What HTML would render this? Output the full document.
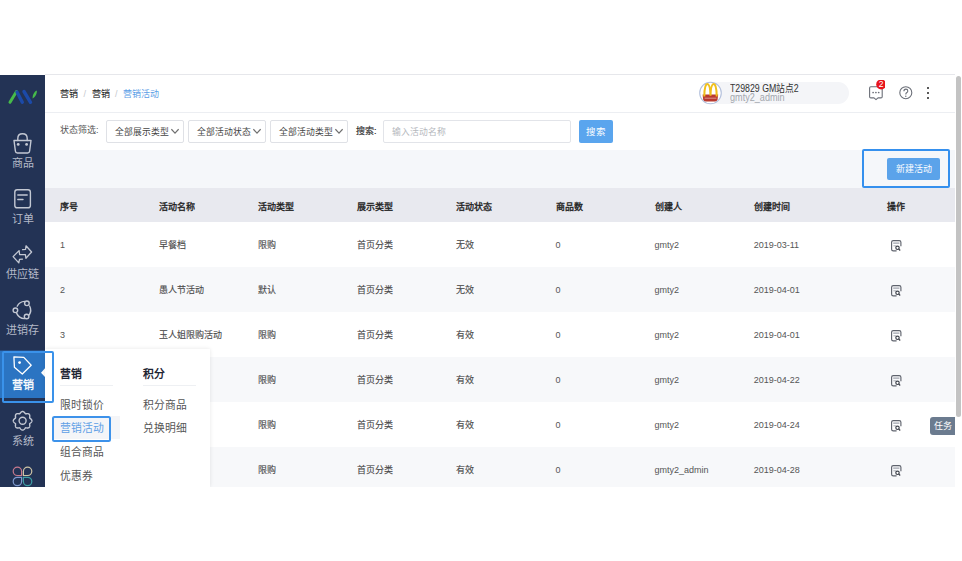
<!DOCTYPE html>
<html lang="zh-CN"><head><meta charset="utf-8">
<style>
*{box-sizing:border-box;margin:0;padding:0}
html,body{width:962px;height:561px;overflow:hidden;background:#fff;font-family:"Liberation Sans",sans-serif;color:#333}
.abs{position:absolute}
#side{left:0;top:75px;width:45px;height:412px;background:#233355;overflow:hidden}
#main{left:45px;top:74px;width:910px;height:413px;background:#fff;overflow:hidden}
.topline{left:0;top:0;width:910px;height:1px;background:#e6e7eb}
.hdr{left:0;top:1px;width:910px;height:38px;border-bottom:1px solid #eceef2;background:#fff}
.bc{left:15px;top:13px;font-size:9px;line-height:12px;color:#2a2a2a;white-space:nowrap;-webkit-text-stroke:0.1px #2a2a2a}
.bc .sep{color:#c5c8ce;margin:0 5.5px;-webkit-text-stroke:0}
.bc .cur{color:#5b9de6;-webkit-text-stroke:0}
.lbl{font-size:9px;line-height:12px;color:#555;white-space:nowrap}
.sel{top:45.5px;height:23px;border:1px solid #dfe1e6;border-radius:2px;background:#fff;font-size:8.8px;line-height:23px;color:#444;padding-left:8px;white-space:nowrap}
.sel svg{position:absolute;right:4px;top:7.6px}
.band{left:0;top:76px;width:910px;height:38px;background:#f5f7fa}
.thead{left:0;top:114px;width:910px;height:34px;background:#e8e9ef}
.row{left:0;width:910px;height:45px;background:#fff}
.row.g{background:#f7f8fa}
.c{position:absolute;font-size:9px;line-height:12px;color:#4a4a4a;white-space:nowrap;top:16.5px;-webkit-text-stroke:0.12px #4a4a4a}
.thead .c{font-weight:normal;color:#222;top:12.8px;-webkit-text-stroke:0.35px #222}
.sb{left:956px;top:76px;width:5px;height:341px;background:#c3c3c3;border-radius:3px}
.sl{left:0;width:45px;text-align:center;font-size:11px;line-height:14px;color:#b4bac8;white-space:nowrap}
.dh{font-size:10.8px;line-height:14px;font-weight:bold;color:#1f2533;white-space:nowrap}
.di{font-size:10.8px;line-height:14px;color:#555;white-space:nowrap}
.c.n{color:#555;-webkit-text-stroke:0}
</style></head><body>
<div id="side" class="abs"></div>
<svg class="abs" style="left:0;top:75px" width="45" height="412" viewBox="0 75 45 412">
  <g fill="none" stroke-linecap="round">
    <path d="M10 102.3 L16.5 91.5" stroke="#46bb4a" stroke-width="3"/>
    <path d="M17 92 L22.3 102.3" stroke="#1c4aa8" stroke-width="3.4"/>
    <path d="M24 91.5 L30.5 102.3" stroke="#1c4aa8" stroke-width="3.4"/>
  </g>
  <path d="M32.6 98.4 C32.4 95 34.5 91.5 36.8 90.6 C37.2 93.5 35.5 97 32.6 98.4Z" fill="#46bb4a"/>
  <g fill="none" stroke="#c3c8d3" stroke-width="1.4" stroke-linejoin="round" stroke-linecap="round">
    <path d="M14 140.5 H31 L29.6 151.2 Q29.4 153 27.6 153 H17.4 Q15.6 153 15.4 151.2 Z"/>
    <path d="M17.8 140.5 V138.5 Q17.8 133.8 22.5 133.8 Q27.2 133.8 27.2 138.5 V140.5"/>
    <rect x="14.8" y="189.8" width="15.6" height="18" rx="2.4"/>
    <path d="M17.8 195 H27.2 M17.8 199.5 H23"/>
    <path d="M22.6 249.6 L25.6 249.3 L26 245.8 L31.6 252 L25.9 258.2 L25.4 254.7 L19.6 254.5 L19.1 250.6 L13.1 256.6 L18.8 262.9 L19.5 259.3 L22.4 259.1" stroke-width="1.3" stroke-linecap="round"/>
    <path d="M17.2 306.2 A8.8 8.8 0 0 1 24.6 301.4 M29.6 306 A8.8 8.8 0 0 1 29.3 314.8 M24.4 318.6 A8.8 8.8 0 0 1 16.7 313.4"/>
    <circle cx="26.9" cy="303.3" r="2.3"/><circle cx="15.4" cy="310.3" r="2.3"/><circle cx="26.6" cy="316.5" r="2.3"/>
    <path d="M31.90 420.80 L31.86 421.16 L31.75 421.52 L31.57 421.86 L31.34 422.18 L31.06 422.48 L30.76 422.76 L30.45 423.02 L30.16 423.25 L29.87 423.48 L29.62 423.71 L29.64 424.05 L29.68 424.41 L29.72 424.79 L29.76 425.19 L29.77 425.59 L29.75 426.00 L29.69 426.39 L29.58 426.76 L29.41 427.09 L29.18 427.38 L28.89 427.61 L28.56 427.78 L28.19 427.89 L27.80 427.95 L27.39 427.97 L26.99 427.96 L26.59 427.92 L26.21 427.88 L25.85 427.84 L25.51 427.82 L25.28 428.07 L25.05 428.36 L24.82 428.65 L24.56 428.96 L24.28 429.26 L23.98 429.54 L23.66 429.77 L23.32 429.95 L22.96 430.06 L22.60 430.10 L22.24 430.06 L21.88 429.95 L21.54 429.77 L21.22 429.54 L20.92 429.26 L20.64 428.96 L20.38 428.65 L20.15 428.36 L19.92 428.07 L19.69 427.82 L19.35 427.84 L18.99 427.88 L18.61 427.92 L18.21 427.96 L17.81 427.97 L17.40 427.95 L17.01 427.89 L16.64 427.78 L16.31 427.61 L16.02 427.38 L15.79 427.09 L15.62 426.76 L15.51 426.39 L15.45 426.00 L15.43 425.59 L15.44 425.19 L15.48 424.79 L15.52 424.41 L15.56 424.05 L15.58 423.71 L15.33 423.48 L15.04 423.25 L14.75 423.02 L14.44 422.76 L14.14 422.48 L13.86 422.18 L13.63 421.86 L13.45 421.52 L13.34 421.16 L13.30 420.80 L13.34 420.44 L13.45 420.08 L13.63 419.74 L13.86 419.42 L14.14 419.12 L14.44 418.84 L14.75 418.58 L15.04 418.35 L15.33 418.12 L15.58 417.89 L15.56 417.55 L15.52 417.19 L15.48 416.81 L15.44 416.41 L15.43 416.01 L15.45 415.60 L15.51 415.21 L15.62 414.84 L15.79 414.51 L16.02 414.22 L16.31 413.99 L16.64 413.82 L17.01 413.71 L17.40 413.65 L17.81 413.63 L18.21 413.64 L18.61 413.68 L18.99 413.72 L19.35 413.76 L19.69 413.78 L19.92 413.53 L20.15 413.24 L20.38 412.95 L20.64 412.64 L20.92 412.34 L21.22 412.06 L21.54 411.83 L21.88 411.65 L22.24 411.54 L22.60 411.50 L22.96 411.54 L23.32 411.65 L23.66 411.83 L23.98 412.06 L24.28 412.34 L24.56 412.64 L24.82 412.95 L25.05 413.24 L25.28 413.53 L25.51 413.78 L25.85 413.76 L26.21 413.72 L26.59 413.68 L26.99 413.64 L27.39 413.63 L27.80 413.65 L28.19 413.71 L28.56 413.82 L28.89 413.99 L29.18 414.22 L29.41 414.51 L29.58 414.84 L29.69 415.21 L29.75 415.60 L29.77 416.01 L29.76 416.41 L29.72 416.81 L29.68 417.19 L29.64 417.55 L29.62 417.89 L29.87 418.12 L30.16 418.35 L30.45 418.58 L30.76 418.84 L31.06 419.12 L31.34 419.42 L31.57 419.74 L31.75 420.08 L31.86 420.44Z"/>
    <circle cx="22.6" cy="420.8" r="3.5"/>
  </g>
  <g fill="#c3c8d3"><circle cx="18.2" cy="144.4" r="1.4"/><circle cx="26.6" cy="144.4" r="1.4"/></g>
  <rect x="0" y="350.6" width="45" height="47.4" fill="#2b74c2"/>
  <path d="M41 372.7 L45 368.3 L45 377.1 Z" fill="#fff"/>
  <g fill="none" stroke="#fff" stroke-width="1.3" stroke-linejoin="round">
    <path d="M13.9 356.8 L23.8 357.4 L31.2 365.2 L22.3 374 L14.4 367.2 Z"/>
  </g>
  <circle cx="19.6" cy="362.6" r="1.4" fill="#fff"/>
  <g fill="none" stroke-width="1.2" stroke-linejoin="round">
    <path d="M21.6 475.5 H17.4 A4.2 4.2 0 1 1 21.6 471.3 Z" stroke="#c87a8e"/>
    <path d="M23.4 475.5 V471.3 A4.2 4.2 0 1 1 27.6 475.5 Z" stroke="#cfc5a6"/>
    <path d="M21.6 477.3 V481.5 A4.2 4.2 0 1 1 17.4 477.3 Z" stroke="#7f9bd0"/>
    <path d="M23.4 477.3 H27.6 A4.2 4.2 0 1 1 23.4 481.5 Z" stroke="#3e9fa5"/>
  </g>
</svg>
<div class="abs sl" style="top:156px">商品</div>
<div class="abs sl" style="top:211.5px">订单</div>
<div class="abs sl" style="top:266.5px">供应链</div>
<div class="abs sl" style="top:322.5px">进销存</div>
<div class="abs sl" style="top:378px;color:#fff;-webkit-text-stroke:0.3px #fff">营销</div>
<div class="abs sl" style="top:434px">系统</div>
<div id="main" class="abs">
  <div class="abs topline"></div>
  <div class="abs hdr">
    <div class="abs bc">营销<span class="sep">/</span>营销<span class="sep">/</span><span class="cur">营销活动</span></div>
  </div>
  <div class="abs" style="left:663px;top:7.6px;width:141px;height:22.6px;background:#f4f5f8;border-radius:11.3px"></div>
  <svg class="abs" style="left:653px;top:7px" width="24" height="24" viewBox="698 81 24 24">
    <circle cx="710.5" cy="93" r="10.8" fill="#fff" stroke="#b3c0dc" stroke-width="1.1"/>
    <path d="M702.6 94.6 H718.2 L717.6 99.5 Q717 101.4 715 101.4 H705.8 Q703.8 101.4 703.2 99.5 Z" fill="#b93a2f"/>
    <path d="M704.3 96.5 C704.3 89 705.5 83.9 707.3 83.9 C709.2 83.9 710.3 89 710.5 95.8 C710.7 89 711.8 83.9 713.7 83.9 C715.5 83.9 716.7 89 716.7 96.5" fill="none" stroke="#f0c01c" stroke-width="2"/>
    <path d="M704.6 98.2 H716.4" stroke="#f3d0c8" stroke-width="0.6"/>
  </svg>
  <div class="abs" style="left:684.5px;top:9.3px;font-size:10px;line-height:12px;color:#333;white-space:nowrap;transform:scaleX(0.877);transform-origin:0 0">T29829 GM站点2</div>
  <div class="abs" style="left:684.5px;top:18px;font-size:10px;line-height:12px;color:#a3a7ae;white-space:nowrap;transform:scaleX(0.91);transform-origin:0 0">gmty2_admin</div>
  <svg class="abs" style="left:820px;top:6px" width="20" height="22" viewBox="865 80 20 22">
    <path d="M870.8 86.8 H881 Q882.2 86.8 882.2 88 V96.7 Q882.2 97.9 881 97.9 H878 L876 99.6 L874 97.9 H870.8 Q869.6 97.9 869.6 96.7 V88 Q869.6 86.8 870.8 86.8 Z" fill="#fff" stroke="#6b6f78" stroke-width="1.1" stroke-linejoin="round"/>
    <circle cx="873.1" cy="92.5" r="0.85" fill="#6b6f78"/><circle cx="875.9" cy="92.5" r="0.85" fill="#6b6f78"/><circle cx="878.7" cy="92.5" r="0.85" fill="#6b6f78"/>
    <circle cx="881.2" cy="84.4" r="5" fill="#e8141c"/>
  </svg>
  <div class="abs" style="left:831.2px;top:5.4px;width:10px;height:10px;font-size:8.5px;line-height:10px;color:#fff;text-align:center">2</div>
  <svg class="abs" style="left:853px;top:11px" width="16" height="16" viewBox="898 85 16 16">
    <circle cx="905.8" cy="92.7" r="6" fill="none" stroke="#6b6f78" stroke-width="1.1"/>
    <path d="M903.9 91.2 Q903.9 89.1 905.9 89.1 Q907.8 89.1 907.8 90.9 Q907.8 92 906.6 92.7 Q905.8 93.2 905.8 94.4" fill="none" stroke="#6b6f78" stroke-width="1.1"/>
    <circle cx="905.8" cy="96.3" r="0.7" fill="#6b6f78"/>
  </svg>
  <div class="abs" style="left:882.1px;top:13.0px;width:2.4px;height:2.4px;border-radius:50%;background:#222"></div>
  <div class="abs" style="left:882.1px;top:17.8px;width:2.4px;height:2.4px;border-radius:50%;background:#222"></div>
  <div class="abs" style="left:882.1px;top:22.8px;width:2.4px;height:2.4px;border-radius:50%;background:#222"></div>
  <div class="abs lbl" style="left:15px;top:50px">状态筛选:</div>
  <div class="abs sel" style="left:61px;width:78px">全部展示类型<svg width="8" height="7" viewBox="0 0 8 7"><path d="M0.4 1.2 L4 5.2 L7.6 1.2" fill="none" stroke="#707070" stroke-width="1.2"/></svg></div>
  <div class="abs sel" style="left:142.5px;width:78px">全部活动状态<svg width="8" height="7" viewBox="0 0 8 7"><path d="M0.4 1.2 L4 5.2 L7.6 1.2" fill="none" stroke="#707070" stroke-width="1.2"/></svg></div>
  <div class="abs sel" style="left:224.5px;width:78.5px">全部活动类型<svg width="8" height="7" viewBox="0 0 8 7"><path d="M0.4 1.2 L4 5.2 L7.6 1.2" fill="none" stroke="#707070" stroke-width="1.2"/></svg></div>
  <div class="abs lbl" style="left:311px;top:51px;color:#333;-webkit-text-stroke:0.2px #333">搜索:</div>
  <div class="abs sel" style="left:338px;width:188px;color:#b4b7bd;padding-left:8px;border-color:#e2e4e9">输入活动名称</div>
  <div class="abs" style="left:534px;top:45.5px;width:34px;height:23px;background:#5aa5ee;border-radius:2px;color:#fff;font-size:9.5px;line-height:23px;text-align:center">搜索</div>
  <div class="abs band"></div>
  <div class="abs" style="left:817px;top:75px;width:88px;height:39px;border:2px solid #3590ee;border-radius:2px"></div>
  <div class="abs" style="left:842px;top:84px;width:53px;height:22px;background:#5ba3ea;border-radius:2px;color:#fff;font-size:9px;line-height:22px;text-align:center">新建活动</div>
  <div class="abs thead">
    <div class="c" style="left:15px">序号</div>
    <div class="c" style="left:114.1px">活动名称</div>
    <div class="c" style="left:213.2px">活动类型</div>
    <div class="c" style="left:312.3px">展示类型</div>
    <div class="c" style="left:411.4px">活动状态</div>
    <div class="c" style="left:510.5px">商品数</div>
    <div class="c" style="left:609.6px">创建人</div>
    <div class="c" style="left:708.7px">创建时间</div>
    <div class="c" style="left:842px">操作</div>
  </div>
  <div class="abs row" style="top:148px"><div class="c n" style="left:15px">1</div><div class="c" style="left:114.1px">早餐档</div><div class="c" style="left:213.2px">限购</div><div class="c" style="left:312.3px">首页分类</div><div class="c" style="left:411.4px">无效</div><div class="c n" style="left:510.5px">0</div><div class="c n" style="left:609.6px">gmty2</div><div class="c n" style="left:708.7px">2019-03-11</div><svg class="ic" width="12" height="12" viewBox="0 0 12 12" style="position:absolute;left:846px;top:17.5px"><path d="M5.6 10.9 H2.3 Q0.6 10.9 0.6 9.2 V2.3 Q0.6 0.6 2.3 0.6 H8.2 Q9.9 0.6 9.9 2.3 V6.3" fill="none" stroke="#5f636d" stroke-width="1.15"/><rect x="2.2" y="2.4" width="6.2" height="1.5" fill="#aeb2ba"/><path d="M2.4 5.8 H5.4" stroke="#9a9ea6" stroke-width="0.8"/><circle cx="6.5" cy="7.8" r="1.7" fill="#fff" stroke="#3f434c" stroke-width="1.15"/><path d="M7.7 9 L9.2 10.5" stroke="#3f434c" stroke-width="1.15"/></svg></div>
  <div class="abs row g" style="top:193px"><div class="c n" style="left:15px">2</div><div class="c" style="left:114.1px">愚人节活动</div><div class="c" style="left:213.2px">默认</div><div class="c" style="left:312.3px">首页分类</div><div class="c" style="left:411.4px">无效</div><div class="c n" style="left:510.5px">0</div><div class="c n" style="left:609.6px">gmty2</div><div class="c n" style="left:708.7px">2019-04-01</div><svg class="ic" width="12" height="12" viewBox="0 0 12 12" style="position:absolute;left:846px;top:17.5px"><path d="M5.6 10.9 H2.3 Q0.6 10.9 0.6 9.2 V2.3 Q0.6 0.6 2.3 0.6 H8.2 Q9.9 0.6 9.9 2.3 V6.3" fill="none" stroke="#5f636d" stroke-width="1.15"/><rect x="2.2" y="2.4" width="6.2" height="1.5" fill="#aeb2ba"/><path d="M2.4 5.8 H5.4" stroke="#9a9ea6" stroke-width="0.8"/><circle cx="6.5" cy="7.8" r="1.7" fill="#fff" stroke="#3f434c" stroke-width="1.15"/><path d="M7.7 9 L9.2 10.5" stroke="#3f434c" stroke-width="1.15"/></svg></div>
  <div class="abs row" style="top:238px"><div class="c n" style="left:15px">3</div><div class="c" style="left:114.1px">玉人姐限购活动</div><div class="c" style="left:213.2px">限购</div><div class="c" style="left:312.3px">首页分类</div><div class="c" style="left:411.4px">有效</div><div class="c n" style="left:510.5px">0</div><div class="c n" style="left:609.6px">gmty2</div><div class="c n" style="left:708.7px">2019-04-01</div><svg class="ic" width="12" height="12" viewBox="0 0 12 12" style="position:absolute;left:846px;top:17.5px"><path d="M5.6 10.9 H2.3 Q0.6 10.9 0.6 9.2 V2.3 Q0.6 0.6 2.3 0.6 H8.2 Q9.9 0.6 9.9 2.3 V6.3" fill="none" stroke="#5f636d" stroke-width="1.15"/><rect x="2.2" y="2.4" width="6.2" height="1.5" fill="#aeb2ba"/><path d="M2.4 5.8 H5.4" stroke="#9a9ea6" stroke-width="0.8"/><circle cx="6.5" cy="7.8" r="1.7" fill="#fff" stroke="#3f434c" stroke-width="1.15"/><path d="M7.7 9 L9.2 10.5" stroke="#3f434c" stroke-width="1.15"/></svg></div>
  <div class="abs row g" style="top:283px"><div class="c n" style="left:15px">4</div><div class="c" style="left:114.1px">限时活动</div><div class="c" style="left:213.2px">限购</div><div class="c" style="left:312.3px">首页分类</div><div class="c" style="left:411.4px">有效</div><div class="c n" style="left:510.5px">0</div><div class="c n" style="left:609.6px">gmty2</div><div class="c n" style="left:708.7px">2019-04-22</div><svg class="ic" width="12" height="12" viewBox="0 0 12 12" style="position:absolute;left:846px;top:17.5px"><path d="M5.6 10.9 H2.3 Q0.6 10.9 0.6 9.2 V2.3 Q0.6 0.6 2.3 0.6 H8.2 Q9.9 0.6 9.9 2.3 V6.3" fill="none" stroke="#5f636d" stroke-width="1.15"/><rect x="2.2" y="2.4" width="6.2" height="1.5" fill="#aeb2ba"/><path d="M2.4 5.8 H5.4" stroke="#9a9ea6" stroke-width="0.8"/><circle cx="6.5" cy="7.8" r="1.7" fill="#fff" stroke="#3f434c" stroke-width="1.15"/><path d="M7.7 9 L9.2 10.5" stroke="#3f434c" stroke-width="1.15"/></svg></div>
  <div class="abs row" style="top:328px"><div class="c n" style="left:15px">5</div><div class="c" style="left:114.1px">五一活动</div><div class="c" style="left:213.2px">限购</div><div class="c" style="left:312.3px">首页分类</div><div class="c" style="left:411.4px">有效</div><div class="c n" style="left:510.5px">0</div><div class="c n" style="left:609.6px">gmty2</div><div class="c n" style="left:708.7px">2019-04-24</div><svg class="ic" width="12" height="12" viewBox="0 0 12 12" style="position:absolute;left:846px;top:17.5px"><path d="M5.6 10.9 H2.3 Q0.6 10.9 0.6 9.2 V2.3 Q0.6 0.6 2.3 0.6 H8.2 Q9.9 0.6 9.9 2.3 V6.3" fill="none" stroke="#5f636d" stroke-width="1.15"/><rect x="2.2" y="2.4" width="6.2" height="1.5" fill="#aeb2ba"/><path d="M2.4 5.8 H5.4" stroke="#9a9ea6" stroke-width="0.8"/><circle cx="6.5" cy="7.8" r="1.7" fill="#fff" stroke="#3f434c" stroke-width="1.15"/><path d="M7.7 9 L9.2 10.5" stroke="#3f434c" stroke-width="1.15"/></svg></div>
  <div class="abs row g" style="top:373px"><div class="c n" style="left:15px">6</div><div class="c" style="left:114.1px">测试活动</div><div class="c" style="left:213.2px">限购</div><div class="c" style="left:312.3px">首页分类</div><div class="c" style="left:411.4px">有效</div><div class="c n" style="left:510.5px">0</div><div class="c n" style="left:609.6px">gmty2_admin</div><div class="c n" style="left:708.7px">2019-04-28</div><svg class="ic" width="12" height="12" viewBox="0 0 12 12" style="position:absolute;left:846px;top:17.5px"><path d="M5.6 10.9 H2.3 Q0.6 10.9 0.6 9.2 V2.3 Q0.6 0.6 2.3 0.6 H8.2 Q9.9 0.6 9.9 2.3 V6.3" fill="none" stroke="#5f636d" stroke-width="1.15"/><rect x="2.2" y="2.4" width="6.2" height="1.5" fill="#aeb2ba"/><path d="M2.4 5.8 H5.4" stroke="#9a9ea6" stroke-width="0.8"/><circle cx="6.5" cy="7.8" r="1.7" fill="#fff" stroke="#3f434c" stroke-width="1.15"/><path d="M7.7 9 L9.2 10.5" stroke="#3f434c" stroke-width="1.15"/></svg></div>
</div>
<div class="abs sb"></div>
<div class="abs" style="left:930px;top:417px;width:25px;height:18px;background:#6b7b8f;border-radius:3px 0 0 3px;color:#fff;font-size:9px;line-height:18px;text-align:center">任务</div>
<div class="abs" style="left:45px;top:349px;width:165px;height:138px;background:#fff;box-shadow:0 0 4px rgba(0,0,0,0.10)"></div>
<div class="abs" style="left:45px;top:346px;width:10px;height:141px;background:transparent"></div>
<div class="abs dh" style="left:60px;top:366.6px">营销</div>
<div class="abs dh" style="left:143px;top:366.6px">积分</div>
<div class="abs" style="left:60px;top:385px;width:53px;height:1px;background:#eef0f3"></div>
<div class="abs" style="left:143px;top:385px;width:53px;height:1px;background:#eef0f3"></div>
<div class="abs" style="left:52px;top:416px;width:68px;height:22.5px;background:#f4f5f8"></div>
<div class="abs" style="left:52px;top:415.5px;width:58.5px;height:26.5px;border:2px solid #3d92ea;border-radius:2.5px"></div>
<div class="abs di" style="left:60px;top:398px">限时锁价</div>
<div class="abs di" style="left:60px;top:421.3px;color:#5f9fe6">营销活动</div>
<div class="abs di" style="left:60px;top:445px">组合商品</div>
<div class="abs di" style="left:60px;top:469px">优惠券</div>
<div class="abs di" style="left:143px;top:398px">积分商品</div>
<div class="abs di" style="left:143px;top:421.3px">兑换明细</div>
<div class="abs" style="left:0;top:487px;width:962px;height:74px;background:#fff"></div>

<div class="abs" style="left:1.5px;top:350.5px;width:52.5px;height:52.5px;border:2px solid #3a92ea;border-radius:2px"></div>
</body></html>
